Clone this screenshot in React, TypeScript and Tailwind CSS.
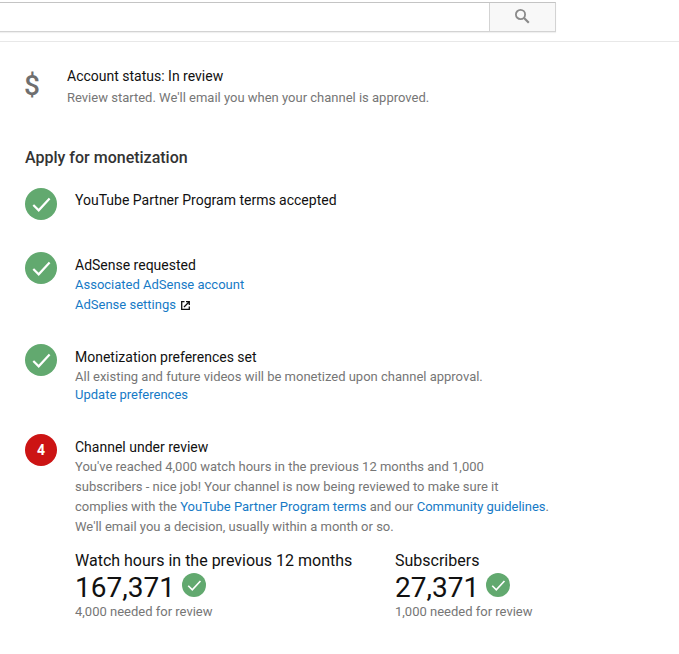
import React from "react";

function Check({ size = 32 }: { size?: number }) {
  return (
    <svg width={size} height={size} viewBox="0 0 32 32" className="shrink-0 block">
      <circle cx="16" cy="16" r="16" fill="#62a96f" />
      <path d="M8.3 17 L13.7 22.3 L24.6 10.6" fill="none" stroke="#fff" strokeWidth="2.2" />
    </svg>
  );
}

function A({ children }: { children: React.ReactNode }) {
  return <a className="text-[#167ac6]">{children}</a>;
}

export default function App() {
  return (
    <div className="w-[679px] h-[654px] bg-white overflow-hidden font-['Roboto',sans-serif] text-[13px] leading-5 text-[#767676]">
      <header className="h-[42px] border-b border-[#e8e8e8] pt-[2px]">
        <div className="flex h-[30px] w-[556px] border border-l-0 border-[#d3d3d3] border-t-[#c4c4c4] shadow-[0_1px_1px_rgba(0,0,0,0.06)]">
          <div className="flex-1 bg-white" />
          <div className="w-[66px] bg-[#f8f8f8] border-l border-[#d3d3d3] flex items-center justify-center">
            <svg width="18" height="18" viewBox="0 0 18 18" fill="none" stroke="#8a8a8a" strokeWidth="1.8" className="mr-[2px] mb-[2px]">
              <circle cx="7.5" cy="7.5" r="4.6" />
              <path d="M11 11 L15.8 15.8" strokeWidth="2.2" />
            </svg>
          </div>
        </div>
      </header>

      <main className="pl-[25px]">
        <section className="flex pt-[24px]">
          <div className="w-[43px] -ml-px shrink-0 text-[#6f6f6f] text-[28px] leading-[40px] font-medium">$</div>
          <div>
            <div className="text-[14px] text-[#111]">Account status: In review</div>
            <div className="mt-[2px]">Review started. We'll email you when your channel is approved.</div>
          </div>
        </section>

        <h2 className="mt-[40px] text-[16px] leading-5 font-medium text-[#333]">Apply for monetization</h2>

        <section className="flex mt-[20px] h-[64px]">
          <Check />
          <div className="ml-[18px] pt-[2px] text-[14px] text-[#111]">YouTube Partner Program terms accepted</div>
        </section>

        <section className="flex h-[92px]">
          <Check />
          <div className="ml-[18px] pt-[3px]">
            <div className="text-[14px] text-[#111]">AdSense requested</div>
            <div><A>Associated AdSense account</A></div>
            <div className="flex items-center">
              <A>AdSense settings</A>
              <svg width="9" height="9" viewBox="0 0 9 9" fill="none" stroke="#111" strokeWidth="1.3" className="ml-[5px] mt-px">
                <path d="M3.5 0.7 H0.7 V8.3 H8.3 V5.5" />
                <path d="M3 6 L8 1 M5 0.7 H8.3 V4" />
              </svg>
            </div>
          </div>
        </section>

        <section className="flex h-[90px]">
          <Check />
          <div className="ml-[18px] pt-[3px]">
            <div className="text-[14px] text-[#111]">Monetization preferences set</div>
            <div>All existing and future videos will be monetized upon channel approval.</div>
            <div className="-mt-[2px]"><A>Update preferences</A></div>
          </div>
        </section>

        <section className="flex">
          <div className="w-8 h-8 rounded-full bg-[#cc1414] text-white text-[14px] font-bold flex items-center justify-center shrink-0">4</div>
          <div className="ml-[18px] pt-[3px]">
            <div className="text-[14px] text-[#111]">Channel under review</div>
            <p className="w-[476px]">
              You've reached 4,000 watch hours in the previous 12 months and 1,000 subscribers - nice job! Your channel is now being reviewed to make sure it complies with the <A>YouTube Partner Program terms</A> and our <A>Community guidelines</A>. We'll email you a decision, usually within a month or so.
            </p>
            <div className="flex mt-[14px]">
              <div className="w-[320px]">
                <div className="text-[16px] leading-5 text-[#111]">Watch hours in the previous 12 months</div>
                <div className="flex items-start h-[31px]">
                  <span className="text-[28px] leading-[34px] text-[#111]">167,371</span>
                  <span className="ml-[7px] mt-[2px]"><Check size={24} /></span>
                </div>
                <div>4,000 needed for review</div>
              </div>
              <div>
                <div className="text-[16px] leading-5 text-[#111]">Subscribers</div>
                <div className="flex items-start h-[31px]">
                  <span className="text-[28px] leading-[34px] text-[#111]">27,371</span>
                  <span className="ml-[7px] mt-[2px]"><Check size={24} /></span>
                </div>
                <div>1,000 needed for review</div>
              </div>
            </div>
          </div>
        </section>
      </main>
    </div>
  );
}
